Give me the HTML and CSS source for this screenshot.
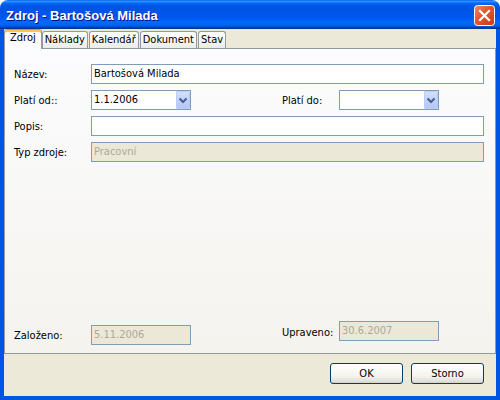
FILE: index.html
```html
<!DOCTYPE html>
<html lang="cs">
<head>
<meta charset="utf-8">
<title>Zdroj - Bartošová Milada</title>
<link rel="stylesheet" href="styles.css">
</head>
<body>
<div class="window">
  <div class="titlebar">
    <span class="title">Zdroj - Bartošová Milada</span>
    <button class="close" aria-label="Zavřít">
      <svg width="21" height="21" viewBox="0 0 21 21">
        <defs>
          <linearGradient id="cg" x1="0" y1="0" x2="1" y2="1">
            <stop offset="0" stop-color="#F08A69"/>
            <stop offset="0.45" stop-color="#E2552F"/>
            <stop offset="1" stop-color="#C33B16"/>
          </linearGradient>
        </defs>
        <rect x="0.5" y="0.5" width="20" height="20" rx="3" fill="url(#cg)" stroke="#fff"/>
        <path d="M6 6 L15 15 M15 6 L6 15" stroke="#fff" stroke-width="2.2" stroke-linecap="square"/>
      </svg>
    </button>
  </div>
  <div class="client">
    <div class="tabs">
      <div class="tab active">Zdroj</div>
      <div class="tab">Náklady</div>
      <div class="tab">Kalendář</div>
      <div class="tab">Dokument</div>
      <div class="tab">Stav</div>
    </div>
    <div class="panel">
      <div class="form">
        <span class="label">Název:</span>
        <div class="edit span-all">Bartošová Milada</div>

        <span class="label">Platí od::</span>
        <div class="combo">
          <span class="val">1.1.2006</span>
          <span class="drop"><svg width="12" height="16" viewBox="0 0 12 16"><path d="M2.5 6.5 L6 10 L9.5 6.5" fill="none" stroke="#4D6185" stroke-width="2.2"/></svg></span>
        </div>
        <span></span>
        <span class="label">Platí do:</span>
        <div class="combo">
          <span class="val"></span>
          <span class="drop"><svg width="12" height="16" viewBox="0 0 12 16"><path d="M2.5 6.5 L6 10 L9.5 6.5" fill="none" stroke="#4D6185" stroke-width="2.2"/></svg></span>
        </div>
        <span></span>

        <span class="label">Popis:</span>
        <div class="edit span-all"></div>

        <span class="label">Typ zdroje:</span>
        <div class="edit disabled span-all">Pracovní</div>
      </div>

      <div class="form bottom">
        <span class="label">Založeno:</span>
        <div class="edit disabled">5.11.2006</div>
        <span></span>
        <span class="label raised">Upraveno:</span>
        <div class="edit disabled raised">30.6.2007</div>
        <span></span>
      </div>
    </div>
    <div class="footer">
      <button class="btn">OK</button>
      <button class="btn">Storno</button>
    </div>
  </div>
</div>
</body>
</html>
```
FILE: styles.css
```css
* { box-sizing: border-box; }
html, body { margin: 0; padding: 0; background: #ffffff; }
body {
  font-family: "DejaVu Sans Condensed", "Liberation Sans", sans-serif;
  font-size: 11px;
  color: #000;
}
.window {
  width: 500px;
  height: 400px;
  display: flex;
  flex-direction: column;
}
.titlebar {
  height: 29px;
  flex: none;
  border-radius: 8px 8px 0 0;
  background: linear-gradient(to bottom, #0058EE 0%, #3593FF 4%, #288EFF 6%, #127DFF 8%, #036FFC 10%, #0262EE 14%, #0057E5 20%, #0054E3 24%, #0055EB 56%, #005BF5 66%, #026AFE 76%, #0062EF 86%, #0052D6 92%, #0040AB 94%, #003092 100%);
  display: flex;
  align-items: center;
  justify-content: space-between;
  padding: 0 5px 0 6px;
}
.title {
  color: #fff;
  font: bold 13px "Liberation Sans", sans-serif;
  text-shadow: 1px 1px 0 #0F1089;
  margin-top: 1px;
}
.close {
  width: 21px;
  height: 21px;
  padding: 0;
  border: 0;
  background: none;
  display: block;
  margin-top: 2px;
}
.close svg { display: block; }
.client {
  flex: 1;
  display: flex;
  flex-direction: column;
  background: #ECE9D8;
  border-style: solid;
  border-color: #0055E5;
  border-width: 0 4px 4px 4px;
}
.tabs {
  height: 19px;
  flex: none;
  display: flex;
  align-items: flex-end;
}
.tab {
  height: 17px;
  line-height: 15px;
  padding: 0 2px;
  margin-left: 1px;
  border: 1px solid #919B9C;
  border-bottom: none;
  border-radius: 3px 3px 0 0;
  background: linear-gradient(#FFFFFF, #F7F7F4 50%, #ECEBE5);
  position: relative;
}
.tab.active {
  height: 20px;
  margin-left: 0;
  margin-bottom: -1px;
  z-index: 1;
  padding: 0 5px;
  line-height: 16px;
  border-top: 1px solid #E68B2C;
  box-shadow: inset 0 2px 0 #FFC73C;
  background: #FCFCFE;
}
.tab.active + .tab { margin-left: 0; }
.panel {
  flex: 1;
  border: 1px solid #919B9C;
  background: linear-gradient(#FCFCFE, #F4F3EE);
  padding: 15px 11px 8px 9px;
  display: flex;
  flex-direction: column;
  justify-content: space-between;
}
.form {
  display: grid;
  grid-template-columns: 77px 100px 91px 57px 100px 1fr;
  grid-auto-rows: 20px;
  row-gap: 6px;
  align-items: center;
}
.form.bottom {
  align-items: end;
}
.label {
  white-space: nowrap;
}
.form.bottom .label { align-self: center; }
.form.bottom .label.raised { margin-bottom: 6px; }
.form.bottom .edit { align-self: end; }
.form.bottom .edit.raised { margin-bottom: 4px; }
.span-all { grid-column: 2 / -1; }
.edit {
  height: 20px;
  border: 1px solid #7F9DB9;
  background: #fff;
  padding: 0 2px;
  line-height: 18px;
  white-space: nowrap;
  overflow: hidden;
}
.edit.disabled {
  background: #EBE8D7;
  color: #ACA899;
}
.combo {
  height: 20px;
  border: 1px solid #7F9DB9;
  background: #fff;
  display: flex;
  line-height: 18px;
}
.combo .val {
  flex: 1;
  padding: 0 2px;
}
.drop {
  width: 14px;
  height: 18px;
  border: 1px solid #B9CDF9;
  border-radius: 1px;
  background: linear-gradient(#D3E0FD, #C1D3FB 50%, #B3C6F5);
  display: flex;
  align-items: center;
  justify-content: center;
}
.drop svg { display: block; }
.footer {
  height: 42px;
  flex: none;
  display: flex;
  justify-content: flex-end;
  align-items: flex-start;
  gap: 8px;
  padding: 9px 12px 0 0;
}
.btn {
  width: 73px;
  height: 21px;
  border: 1px solid #003C74;
  border-radius: 3px;
  background: linear-gradient(#FFFFFF, #F5F4EF 60%, #E3E1D8 90%, #D6D0C5);
  font-family: "DejaVu Sans Condensed", "Liberation Sans", sans-serif;
  font-size: 11px;
  color: #000;
  padding: 0;
}
```
